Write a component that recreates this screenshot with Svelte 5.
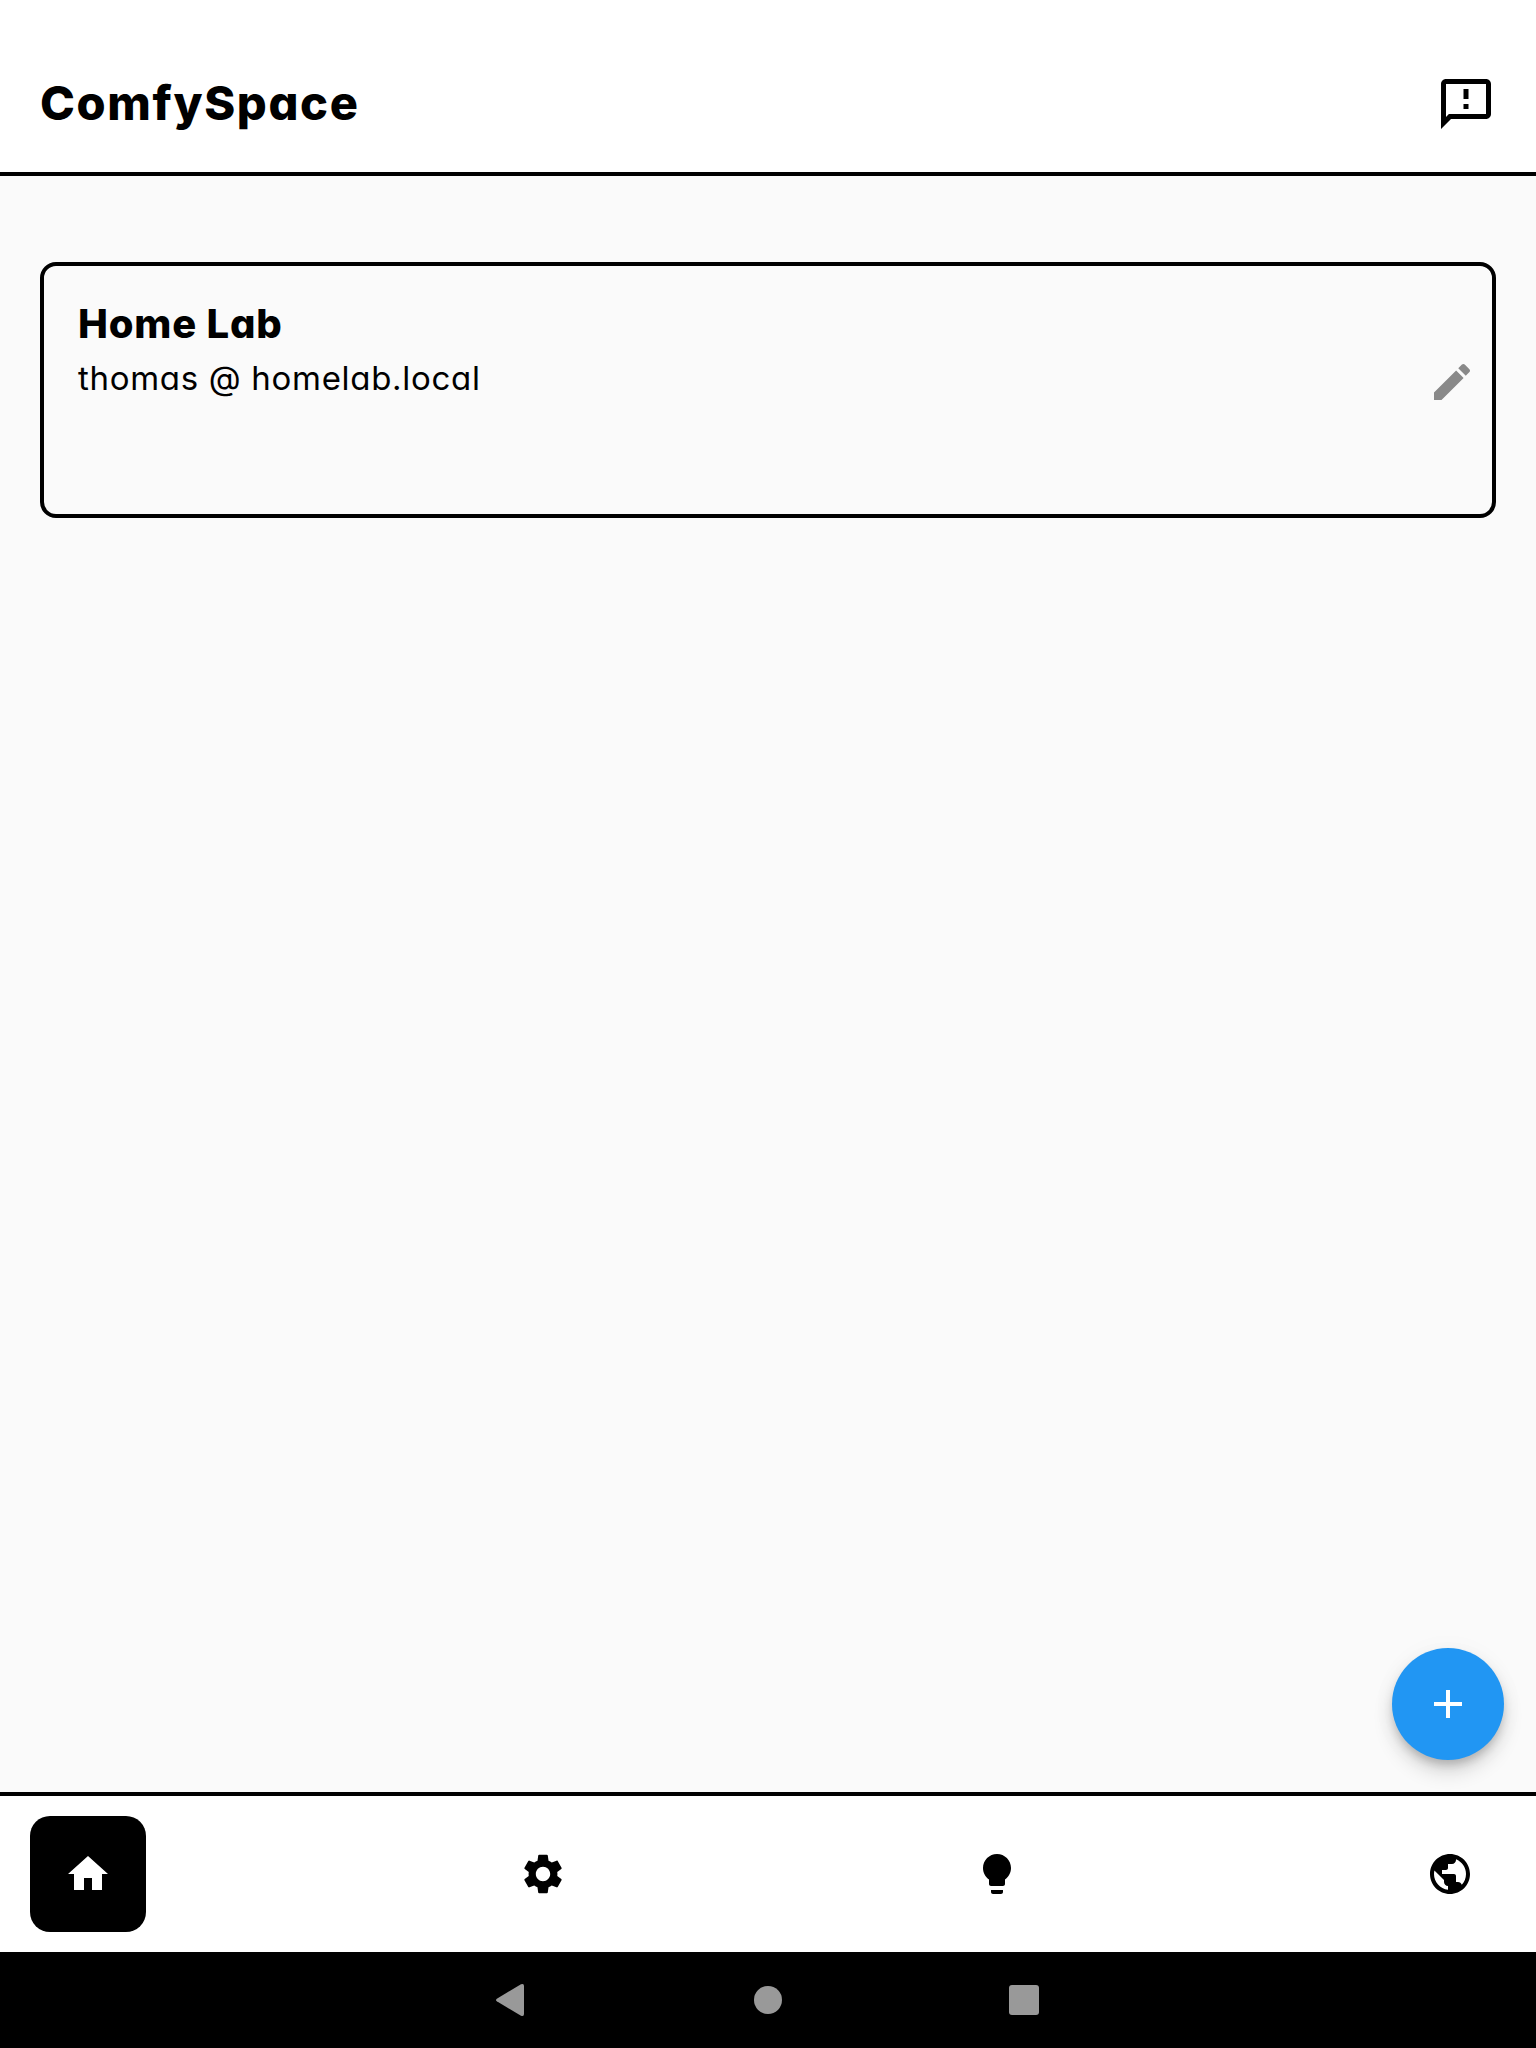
<script>
  const spaces = [{ name: 'Home Lab', user: 'thomas', host: 'homelab.local' }];

  const tabs = [
    { id: 'Home', d: 'M10 20v-6h4v6h5v-8h3L12 3 2 12h3v8z' },
    {
      id: 'Settings',
      d: 'M19.14 12.94c.04-.3.06-.61.06-.94 0-.32-.02-.64-.07-.94l2.03-1.58c.18-.14.23-.41.12-.61l-1.92-3.32c-.12-.22-.37-.29-.59-.22l-2.39.96c-.5-.38-1.03-.7-1.62-.94l-.36-2.54c-.04-.24-.24-.41-.48-.41h-3.84c-.24 0-.43.17-.47.41l-.36 2.54c-.59.24-1.13.57-1.62.94l-2.39-.96c-.22-.08-.47 0-.59.22L2.74 8.87c-.12.21-.08.47.12.61l2.03 1.58c-.05.3-.09.63-.09.94s.02.64.07.94l-2.03 1.58c-.18.14-.23.41-.12.61l1.92 3.32c.12.22.37.29.59.22l2.39-.96c.5.38 1.03.7 1.62.94l.36 2.54c.05.24.24.41.48.41h3.84c.24 0 .44-.17.47-.41l.36-2.54c.59-.24 1.13-.56 1.62-.94l2.39.96c.22.08.47 0 .59-.22l1.92-3.32c.12-.22.07-.47-.12-.61l-2.01-1.58zM12 15.6c-1.98 0-3.6-1.62-3.6-3.6s1.62-3.6 3.6-3.6 3.6 1.62 3.6 3.6-1.62 3.6-3.6 3.6z'
    },
    {
      id: 'Ideas',
      d: 'M9 21c0 .55.45 1 1 1h4c.55 0 1-.45 1-1v-1H9v1zm3-19C8.14 2 5 5.14 5 9c0 2.38 1.19 4.47 3 5.74V17c0 .55.45 1 1 1h6c.55 0 1-.45 1-1v-2.26c1.81-1.27 3-3.36 3-5.74 0-3.86-3.14-7-7-7z'
    },
    {
      id: 'Web',
      d: 'M12 2C6.48 2 2 6.48 2 12s4.48 10 10 10 10-4.48 10-10S17.52 2 12 2zm-1 17.93c-3.95-.49-7-3.85-7-7.93 0-.62.08-1.21.21-1.79L9 15v1c0 1.1.9 2 2 2v1.93zm6.9-2.54c-.26-.81-1-1.39-1.9-1.39h-1v-3c0-.55-.45-1-1-1H8v-2h2c.55 0 1-.45 1-1V7h2c1.1 0 2-.9 2-2v-.41c2.93 1.19 5 4.06 5 7.41 0 2.08-.8 3.97-2.1 5.39z'
    }
  ];

  let active = $state('Home');
</script>

<div class="screen">
  <header>
    <h1>ComfySpace</h1>
    <button class="feedback" aria-label="Feedback">
      <svg viewBox="0 0 24 24"><path d="M20 2H4c-1.1 0-1.99.9-1.99 2L2 22l4-4h14c1.1 0 2-.9 2-2V4c0-1.1-.9-2-2-2zm0 14H5.17l-.59.59-.58.58V4h16v12zm-9-4h2v2h-2zm0-6h2v4h-2z" /></svg>
    </button>
  </header>

  <main>
    {#each spaces as space}
      <article>
        <div class="info">
          <h2>{space.name}</h2>
          <p>{space.user} @ {space.host}</p>
        </div>
        <button class="edit" aria-label="Edit">
          <svg viewBox="0 0 24 24"><path d="M3 17.25V21h3.75L17.81 9.94l-3.75-3.75L3 17.25zM20.71 7.04c.39-.39.39-1.02 0-1.41l-2.34-2.34c-.39-.39-1.02-.39-1.41 0l-1.83 1.83 3.75 3.75 1.83-1.83z" /></svg>
        </button>
      </article>
    {/each}
    <button class="fab" aria-label="Add">
      <svg viewBox="0 0 24 24"><path d="M19 13h-6v6h-2v-6H5v-2h6V5h2v6h6v2z" /></svg>
    </button>
  </main>

  <nav>
    {#each tabs as tab}
      <button class="tab" class:active={active === tab.id} aria-label={tab.id} onclick={() => (active = tab.id)}>
        <svg viewBox="0 0 24 24"><path d={tab.d} /></svg>
      </button>
    {/each}
  </nav>

  <footer>
    <svg viewBox="0 0 48 48"><path d="M8.8 22.7 33 8.3Q36 7 36 10V38Q36 41 33 39.7L8.8 25.3Q7.2 24 8.8 22.7z" /></svg>
    <svg viewBox="0 0 48 48"><circle cx="24" cy="24" r="14" /></svg>
    <svg viewBox="0 0 48 48"><rect x="9" y="9" width="30" height="30" rx="3" /></svg>
  </footer>
</div>

<style>
  :global(body) {
    margin: 0;
    background: #fafafa;
  }

  .screen {
    box-sizing: border-box;
    width: 1536px;
    height: 2048px;
    display: flex;
    flex-direction: column;
    background: #fafafa;
    color: #000;
    font-family: Inter, 'Open Sans', sans-serif;
    font-feature-settings: 'cv11';
  }

  svg {
    display: block;
    width: 48px;
    height: 48px;
    fill: currentColor;
  }

  button {
    padding: 0;
    border: 0;
    background: none;
    color: inherit;
    display: flex;
    align-items: center;
    justify-content: center;
  }

  h1,
  h2,
  p {
    margin: 0;
    white-space: nowrap;
  }

  header {
    box-sizing: border-box;
    height: 176px;
    padding: 36px 40px 0;
    border-bottom: 4px solid #000;
    background: #fff;
    display: flex;
    align-items: center;
    justify-content: space-between;
  }

  h1 {
    padding-bottom: 2px;
    font-size: 47px;
    line-height: 60px;
    font-weight: 800;
    letter-spacing: 1.65px;
  }

  .feedback svg {
    width: 60px;
    height: 60px;
  }

  main {
    flex: 1;
    padding: 86px 32px 32px 40px;
    display: flex;
    flex-direction: column;
    justify-content: space-between;
  }

  article {
    box-sizing: border-box;
    height: 256px;
    margin-right: 8px;
    padding: 30px 16px 0 34px;
    border: 4px solid #000;
    border-radius: 16px;
    display: flex;
    justify-content: space-between;
  }

  h2 {
    font-size: 40px;
    line-height: 56px;
    font-weight: 800;
    letter-spacing: 0.8px;
  }

  p {
    padding-top: 2px;
    font-size: 33px;
    line-height: 48px;
    font-weight: 400;
    letter-spacing: 0.7px;
  }

  .edit {
    height: 48px;
    margin-top: 62px;
    color: #898989;
  }

  .fab {
    align-self: flex-end;
    width: 112px;
    height: 112px;
    border-radius: 50%;
    background: #2196f3;
    color: #fff;
    box-shadow:
      0 6px 10px -2px rgba(0, 0, 0, 0.2),
      0 12px 20px 0 rgba(0, 0, 0, 0.14),
      0 2px 28px 0 rgba(0, 0, 0, 0.03);
  }

  nav {
    box-sizing: border-box;
    height: 160px;
    padding: 0 30px;
    border-top: 4px solid #000;
    background: #fff;
    display: flex;
    align-items: center;
    justify-content: space-between;
    position: relative;
  }

  .tab {
    width: 112px;
    height: 116px;
    border-radius: 20px;
  }

  .tab.active {
    width: 116px;
    background: #000;
    color: #fff;
  }

  footer {
    height: 96px;
    background: #000;
    color: #999;
    display: flex;
    align-items: center;
    justify-content: center;
    gap: 208px;
  }
</style>
